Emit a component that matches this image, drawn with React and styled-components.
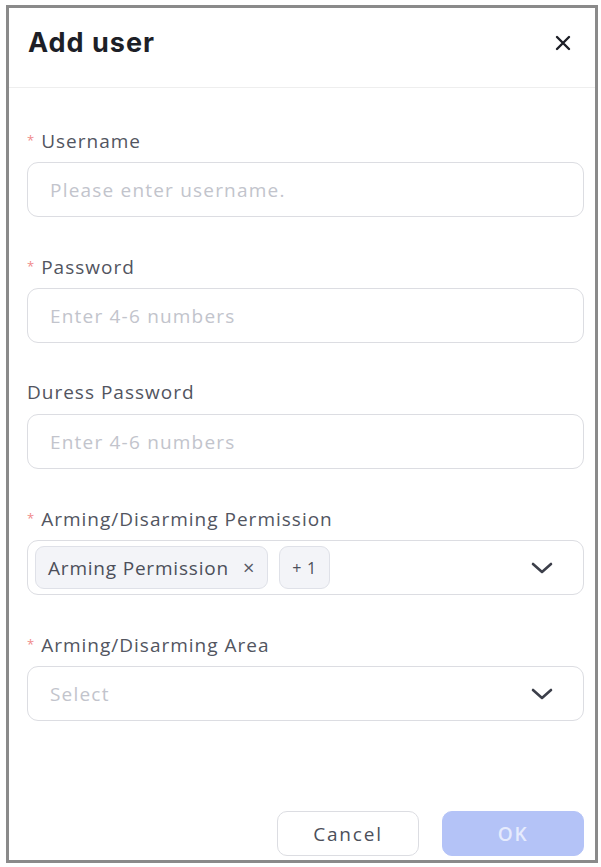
import React from 'react';
import styled, { createGlobalStyle } from 'styled-components';

const GlobalStyle = createGlobalStyle`
    body {
        margin: 0;
        background: #ffffff;
        font-family: "Open Sans", "Noto Sans", sans-serif;
    }
`;

function Chevron() {
    return (
        <svg width="22" height="14" viewBox="0 0 22 14" fill="none">
            <path d="M2 3 L11 11 L20 3" stroke="#3c3f4a" strokeWidth="2.6" strokeLinecap="round" strokeLinejoin="round"/>
        </svg>
    );
}

function Field({label, required, children}) {
    return (
        <FieldWrap>
            <Label>
                {required && <Star>*</Star>}
                {label}
            </Label>
            {children}
        </FieldWrap>
    );
}

function App() {
    return (
        <>
            <GlobalStyle />
            <Modal>
                <Header>
                    <Title>Add user</Title>
                    <Close aria-label="close">
                        <svg width="16" height="16" viewBox="0 0 16 16">
                            <path d="M2 2 L14 14 M14 2 L2 14" stroke="#1d1f27" strokeWidth="2.4" strokeLinecap="round"/>
                        </svg>
                    </Close>
                </Header>

                <Body>
                    <Field label="Username" required>
                        <Input placeholder="Please enter username." />
                    </Field>
                    <Field label="Password" required>
                        <Input placeholder="Enter 4-6 numbers" />
                    </Field>
                    <Field label="Duress Password">
                        <Input placeholder="Enter 4-6 numbers" />
                    </Field>
                    <Field label="Arming/Disarming Permission" required>
                        <SelectBox $tags>
                            <Tag>
                                Arming Permission
                                <TagClose>×</TagClose>
                            </Tag>
                            <Tag $small>+ 1</Tag>
                            <Arrow><Chevron /></Arrow>
                        </SelectBox>
                    </Field>
                    <Field label="Arming/Disarming Area" required>
                        <SelectBox>
                            <Placeholder>Select</Placeholder>
                            <Arrow><Chevron /></Arrow>
                        </SelectBox>
                    </Field>
                </Body>

                <Footer>
                    <Button>Cancel</Button>
                    <Button $primary>OK</Button>
                </Footer>
            </Modal>
        </>
    );
}

const Modal = styled.div`
    box-sizing: border-box;
    margin: 5px 0 0 6px;
    width: 592px;
    height: 858px;
    border: 3px solid #8a8a8a;
    background: #ffffff;
    display: flex;
    flex-direction: column;
`;

const Header = styled.div`
    box-sizing: border-box;
    height: 80px;
    flex-shrink: 0;
    display: flex;
    align-items: center;
    padding: 0 24px 10px 19px;
    border-bottom: 1px solid #eeeeee;
`;

const Title = styled.h2`
    margin: 0;
    font-family: Inter, "Liberation Sans", sans-serif;
    font-size: 27px;
    font-weight: 700;
    color: #1d1f27;
    letter-spacing: 1px;
`;

const Close = styled.button`
    margin-left: auto;
    border: none;
    background: none;
    padding: 0;
    display: flex;
`;

const Body = styled.div`
    flex: 1;
    padding: 40px 11px 0 18px;
    display: flex;
    flex-direction: column;
    gap: 37px;
`;

const FieldWrap = styled.div`
    display: flex;
    flex-direction: column;
    gap: 10px;
`;

const Label = styled.div`
    height: 24px;
    font-size: 19px;
    line-height: 24px;
    letter-spacing: 1px;
    color: #52555f;
`;

const Star = styled.span`
    color: #f08a8a;
    font-size: 13px;
    margin-right: 6px;
    vertical-align: 3px;
`;

const Input = styled.input`
    box-sizing: border-box;
    width: 100%;
    height: 55px;
    border: 1px solid #dcdde2;
    border-radius: 11px;
    padding: 0 22px;
    font-family: "Open Sans", sans-serif;
    font-size: 19px;
    letter-spacing: 1.2px;
    color: #333;
    outline: none;

    &::placeholder {
        color: #c2c4cc;
    }
`;

const SelectBox = styled.div`
    box-sizing: border-box;
    height: 55px;
    border: 1px solid #dcdde2;
    border-radius: 11px;
    display: flex;
    align-items: center;
    gap: 11px;
    padding: ${p => p.$tags ? '0 30px 0 7px' : '0 30px 0 22px'};
`;

const Tag = styled.span`
    box-sizing: border-box;
    height: 43px;
    display: flex;
    align-items: center;
    gap: 14px;
    padding: 0 12px;
    background: #f3f4f8;
    border: 1px solid #dfe1e8;
    border-radius: 9px;
    font-size: ${p => p.$small ? '16px' : '19px'};
    letter-spacing: 0.8px;
    color: #4c4f5a;
`;

const TagClose = styled.span`
    font-size: 20px;
    color: #555865;
    line-height: 1;
`;

const Placeholder = styled.span`
    font-size: 19px;
    letter-spacing: 1.2px;
    color: #c2c4cc;
`;

const Arrow = styled.span`
    margin-left: auto;
    display: flex;
`;

const Footer = styled.div`
    display: flex;
    justify-content: flex-end;
    gap: 23px;
    padding: 0 11px 4px 0;
`;

const Button = styled.button`
    box-sizing: border-box;
    width: 142px;
    height: 45px;
    border-radius: 10px;
    font-family: "Open Sans", sans-serif;
    font-size: 19px;
    letter-spacing: 1.8px;
    border: 1px solid ${p => p.$primary ? '#b4c3f7' : '#dcdde2'};
    background: ${p => p.$primary ? '#b4c3f7' : '#ffffff'};
    color: ${p => p.$primary ? '#e6ebfd' : '#4c4f5a'};
    font-weight: ${p => p.$primary ? 600 : 400};
`;

export default App
